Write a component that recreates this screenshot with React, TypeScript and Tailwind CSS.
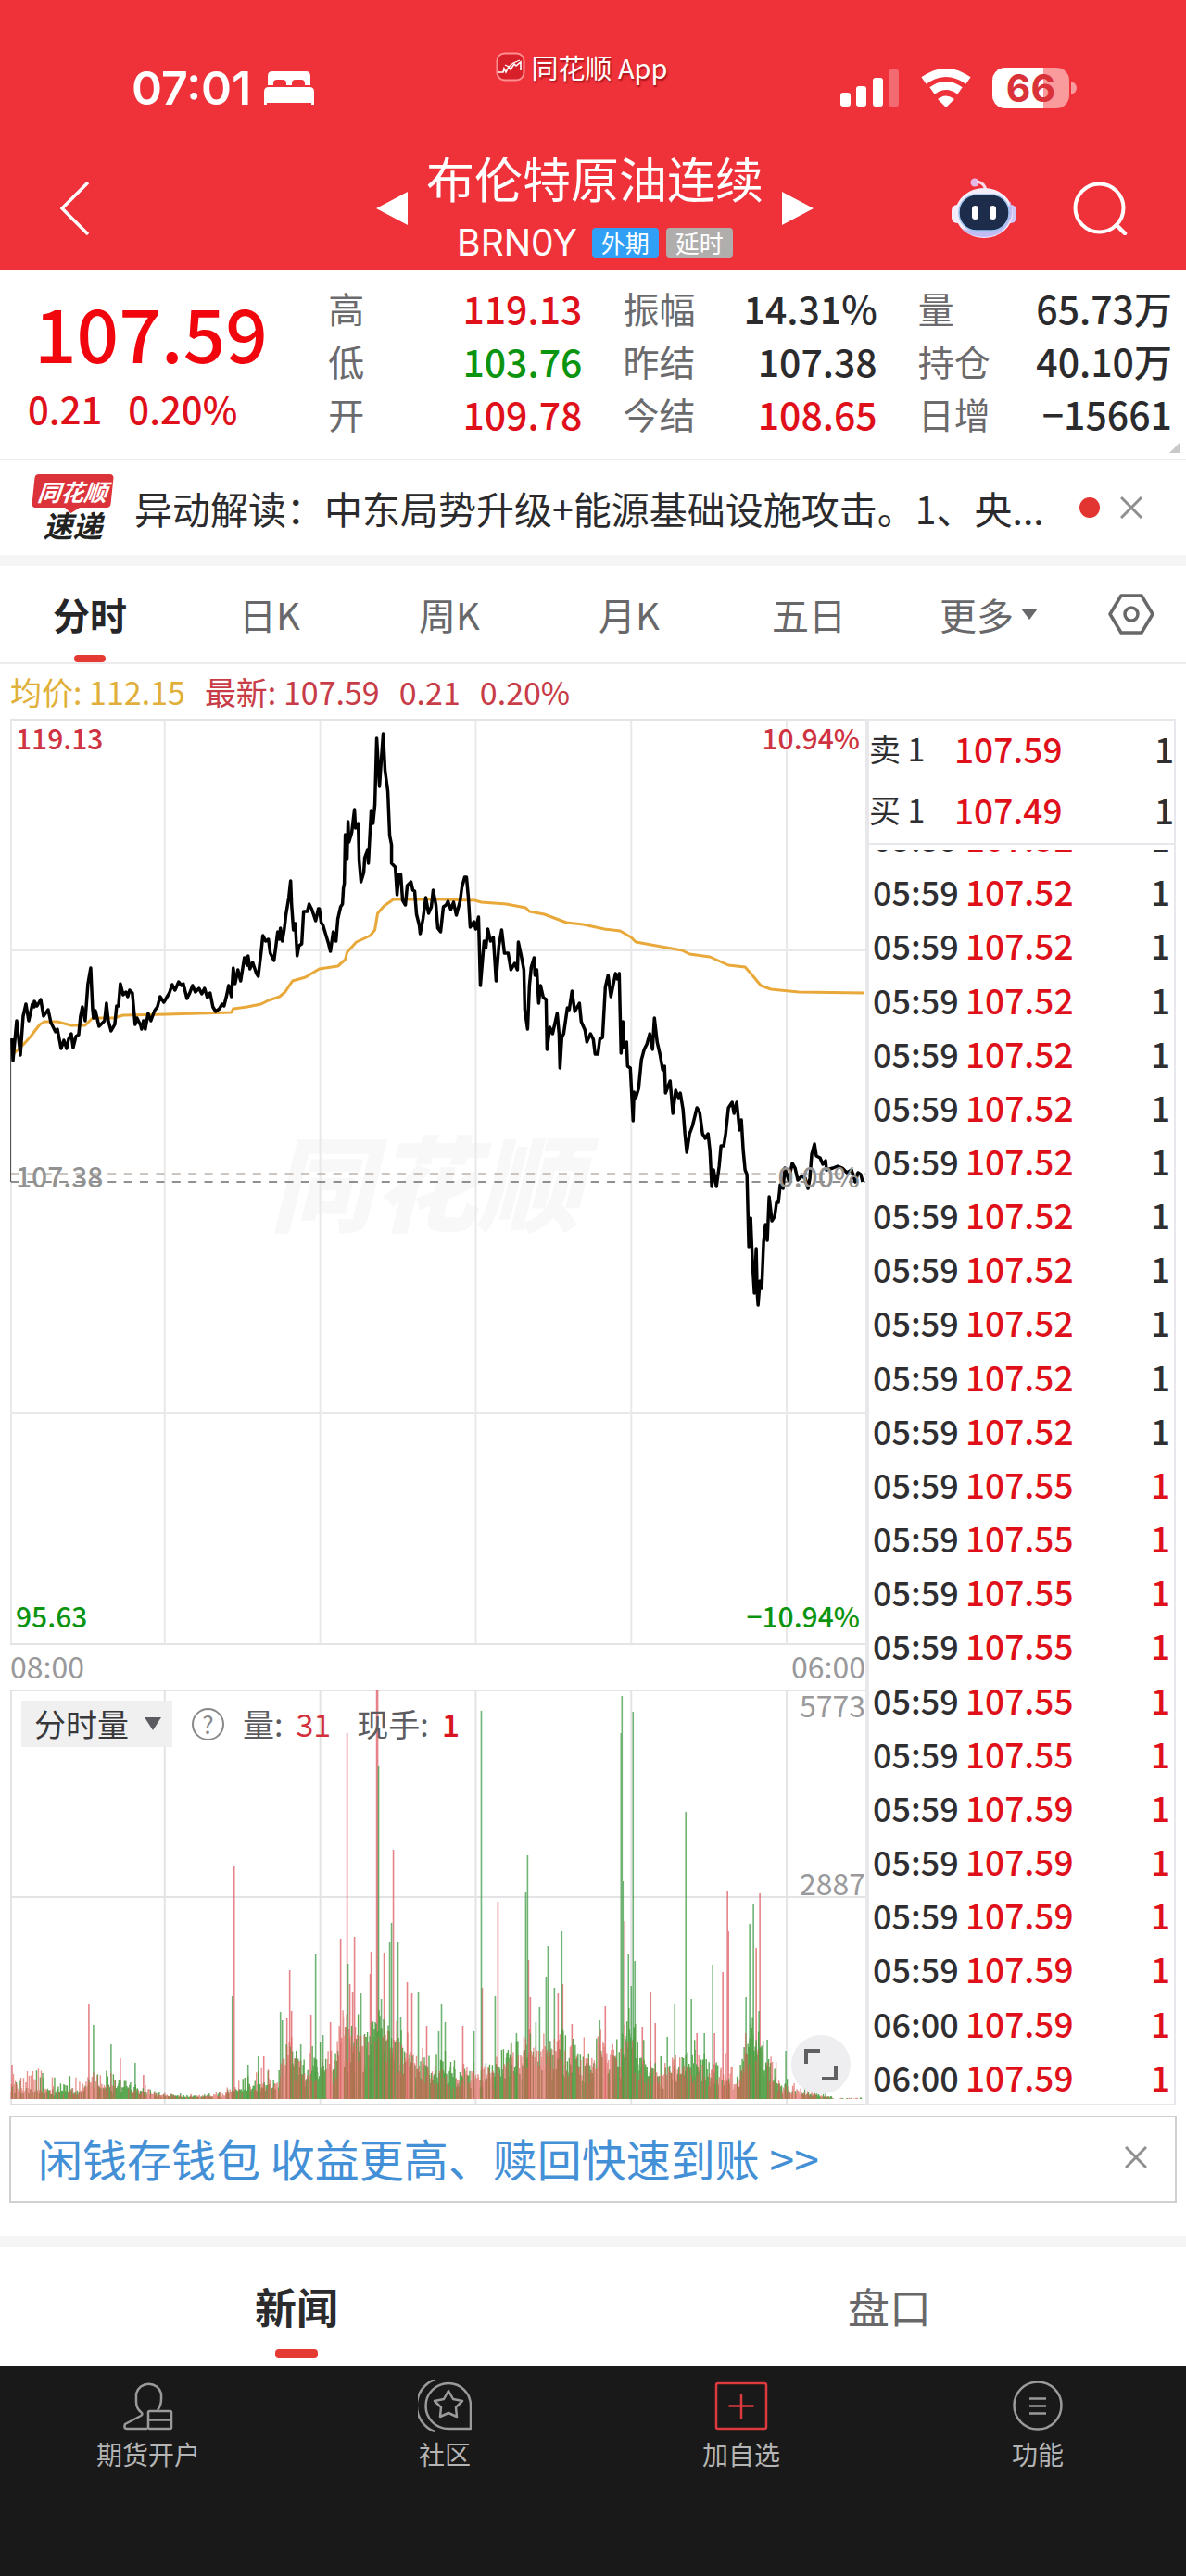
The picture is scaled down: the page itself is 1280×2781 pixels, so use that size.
import { useState } from 'react'
import type { ReactNode } from 'react'

type Tone = 'red' | 'green' | 'dark'

interface Stat {
  label: string
  value: string
  tone: Tone
}

interface Trade {
  time: string
  price: string
  up: boolean
}

const TONES: Record<Tone, string> = {
  red: 'text-[#e0101a]',
  green: 'text-[#0b9410]',
  dark: 'text-[#2b2b2e]',
}

const STATS: Stat[][] = [
  [
    { label: '高', value: '119.13', tone: 'red' },
    { label: '低', value: '103.76', tone: 'green' },
    { label: '开', value: '109.78', tone: 'red' },
  ],
  [
    { label: '振幅', value: '14.31%', tone: 'dark' },
    { label: '昨结', value: '107.38', tone: 'dark' },
    { label: '今结', value: '108.65', tone: 'red' },
  ],
  [
    { label: '量', value: '65.73万', tone: 'dark' },
    { label: '持仓', value: '40.10万', tone: 'dark' },
    { label: '日增', value: '−15661', tone: 'dark' },
  ],
]

const PERIODS = ['分时', '日K', '周K', '月K', '五日', '更多']

const TRADES: Trade[] = [
  ...Array.from({ length: 12 }, () => ({ time: '05:59', price: '107.52', up: false })),
  ...Array.from({ length: 6 }, () => ({ time: '05:59', price: '107.55', up: true })),
  ...Array.from({ length: 4 }, () => ({ time: '05:59', price: '107.59', up: true })),
  ...Array.from({ length: 2 }, () => ({ time: '06:00', price: '107.59', up: true })),
]

// Chart space: 924 x 1000, y grows downwards
const PRICE_LINE =
  '2,345 3,369 7,326 11,363 14,321 17,308 20,326 24,308 26,311 26,305 29,310 33,303 36,321 41,314 44,328 49,338 51,335 55,356 58,347 61,356 63,346 66,340 68,355 71,343 74,341 76,321 78,311 81,326 84,286 87,269 89,313 90,323 92,315 96,332 100,328 102,326 104,307 106,326 109,337 113,330 115,310 117,310 119,286 122,298 125,295 127,300 129,293 132,296 135,330 137,323 141,331 142,335 144,326 146,335 149,318 152,326 156,315 159,311 162,300 166,306 169,301 172,296 175,287 178,293 182,284 185,288 187,286 191,302 194,296 197,288 200,295 204,291 207,297 210,291 213,301 216,296 219,311 222,316 226,313 229,308 231,310 234,298 236,288 239,300 241,269 243,286 246,271 249,283 253,258 256,266 257,256 259,270 262,263 266,275 268,278 271,253 273,234 276,240 279,238 281,253 285,261 287,246 289,230 291,238 292,226 294,240 296,228 298,211 301,193 303,175 304,200 306,228 308,221 310,256 312,245 315,243 317,208 321,208 323,200 326,206 330,218 333,205 334,205 336,220 338,223 341,233 344,243 346,251 349,230 352,240 354,216 357,203 359,200 360,183 361,178 362,125 364,151 365,111 366,133 369,123 372,98 373,118 376,113 377,153 379,176 382,166 383,150 386,142 387,156 390,99 392,113 394,93 396,21 399,73 401,43 403,16 405,56 408,78 410,126 412,136 412,156 416,160 418,190 420,168 422,168 424,196 427,201 429,180 433,176 435,185 437,186 439,211 442,223 443,232 446,216 449,193 452,210 455,203 457,185 460,201 462,226 465,230 468,203 471,201 473,197 476,206 479,198 482,212 486,197 488,182 491,171 493,171 495,193 497,225 501,219 503,227 506,214 508,288 512,240 514,247 516,227 519,240 522,236 525,283 528,245 531,228 534,253 538,253 541,271 545,264 548,271 549,241 552,255 555,271 556,314 559,335 561,288 563,268 566,258 567,277 569,271 571,307 573,288 576,301 579,303 580,357 583,333 586,340 591,318 593,340 594,377 596,344 598,340 602,312 604,314 607,294 610,316 615,307 617,327 621,336 623,349 627,340 630,346 632,362 635,362 637,346 640,344 643,290 646,277 649,300 654,275 656,281 658,275 660,361 662,327 662,355 666,349 667,375 670,377 673,434 674,403 676,409 679,399 682,368 685,357 688,351 691,340 694,357 696,323 699,349 702,362 705,379 707,375 708,404 713,391 716,426 719,401 722,409 724,404 727,422 729,448 731,468 734,448 737,440 742,420 745,425 748,448 751,453 754,448 756,466 758,505 760,487 763,505 766,483 768,461 771,461 773,448 776,420 780,414 782,426 785,414 788,444 790,433 792,466 794,487 796,492 798,570 800,539 802,587 804,620 806,572 807,618 808,633 810,607 812,615 814,565 816,546 818,563 820,516 823,542 826,537 828,522 830,522 832,503 835,507 837,485 841,498 845,480 848,485 851,498 855,494 859,496 862,507 864,496 866,470 869,459 871,472 875,474 878,481 881,477 882,487 889,485 894,483 899,485 904,490 909,487 913,500 916,490 919,492 921,500'

const AVERAGE_LINE =
  '2,363 14,352 22,343 32,330 37,327 51,327 66,331 81,331 89,323 112,323 122,320 169,319 239,317 241,313 256,311 271,308 279,304 291,300 297,295 305,283 319,279 334,270 354,267 362,260 364,252 374,241 389,234 394,228 397,210 404,202 414,195 468,195 502,196 509,198 536,200 557,204 561,208 577,211 601,220 619,222 642,227 659,229 671,236 676,241 726,250 734,254 756,257 776,266 794,268 802,277 811,288 822,292 852,295 923,296'

// x, usual height, highest noise
const VOLUME_ENVELOPE: [number, number, number][] = [
  [0, 14, 38], [6, 10, 26], [30, 9, 34], [71, 7, 24], [85, 17, 30], [111, 13, 34], [136, 8, 18],
  [165, 4, 10], [193, 2, 5], [230, 3, 9], [242, 9, 20], [266, 10, 34], [290, 16, 44], [303, 58, 70],
  [310, 24, 54], [336, 32, 70], [350, 34, 70], [357, 66, 95], [381, 60, 95], [397, 68, 110], [417, 66, 100],
  [438, 32, 60], [470, 26, 55], [499, 24, 50], [523, 26, 50], [548, 46, 75], [577, 48, 92], [597, 46, 85],
  [625, 36, 60], [637, 46, 80], [658, 40, 70], [667, 76, 115], [680, 38, 70], [706, 22, 46], [732, 34, 64],
  [762, 26, 64], [784, 13, 32], [801, 62, 120], [814, 46, 74], [827, 18, 42], [838, 9, 26], [858, 5, 15],
  [880, 3, 8], [890, 0, 1], [923, 0, 2],
]

// x, height, side
const VOLUME_SPIKES: [number, number, 'r' | 'g'][] = [
  [2, 37, 'r'], [85, 102, 'r'], [90, 80, 'g'], [109, 59, 'g'], [119, 44, 'r'], [135, 39, 'g'], [144, 26, 'r'],
  [240, 111, 'g'], [242, 251, 'r'], [257, 37, 'g'], [268, 46, 'g'], [274, 46, 'r'], [292, 94, 'g'], [294, 85, 'g'],
  [299, 87, 'r'], [302, 139, 'r'], [304, 95, 'r'], [314, 59, 'g'], [325, 91, 'r'], [330, 156, 'g'], [338, 69, 'g'],
  [346, 83, 'r'], [357, 173, 'r'], [364, 395, 'r'], [365, 146, 'g'], [367, 124, 'r'], [370, 116, 'r'], [372, 175, 'r'],
  [379, 114, 'g'], [389, 135, 'r'], [390, 159, 'r'], [396, 442, 'r'], [397, 442, 'r'], [398, 360, 'g'], [401, 108, 'g'],
  [404, 158, 'r'], [410, 169, 'g'], [412, 190, 'g'], [414, 269, 'r'], [419, 169, 'g'], [422, 89, 'g'], [429, 126, 'r'],
  [434, 114, 'r'], [441, 116, 'g'], [450, 79, 'r'], [463, 73, 'g'], [466, 103, 'g'], [470, 83, 'g'], [489, 79, 'r'],
  [501, 73, 'g'], [509, 419, 'g'], [510, 120, 'r'], [524, 111, 'g'], [527, 213, 'r'], [547, 71, 'g'], [557, 223, 'g'],
  [559, 263, 'g'], [560, 150, 'r'], [562, 110, 'r'], [568, 83, 'g'], [572, 99, 'g'], [579, 132, 'g'], [581, 165, 'g'],
  [588, 120, 'g'], [592, 114, 'r'], [596, 181, 'g'], [597, 124, 'r'], [607, 81, 'r'], [637, 85, 'g'], [643, 100, 'r'],
  [660, 395, 'g'], [661, 435, 'g'], [662, 235, 'g'], [664, 192, 'r'], [668, 157, 'g'], [671, 122, 'g'], [673, 418, 'g'],
  [675, 149, 'g'], [683, 78, 'r'], [692, 115, 'r'], [697, 82, 'r'], [710, 67, 'g'], [718, 103, 'g'], [730, 310, 'g'],
  [736, 108, 'g'], [742, 71, 'r'], [750, 71, 'g'], [759, 145, 'g'], [761, 71, 'r'], [770, 137, 'r'], [775, 224, 'r'],
  [776, 181, 'r'], [795, 110, 'g'], [799, 189, 'g'], [803, 210, 'g'], [806, 163, 'r'], [809, 95, 'g'], [810, 222, 'r'],
  [818, 64, 'g'], [838, 52, 'g'],
]

const VOLUME_BASE = 442

function envelopeAt(x: number): [number, number] {
  for (let i = 1; i < VOLUME_ENVELOPE.length; i++) {
    const [x1, low1, high1] = VOLUME_ENVELOPE[i]
    if (x > x1) continue
    const [x0, low0, high0] = VOLUME_ENVELOPE[i - 1]
    const t = (x - x0) / (x1 - x0)
    return [low0 + (low1 - low0) * t, high0 + (high1 - high0) * t]
  }
  return [0, 1]
}

// Minute bars for both sides, as two path strings
function buildVolume() {
  let seed = 20117
  const random = () => {
    seed = (seed * 16807) % 2147483647
    return seed / 2147483647
  }
  const paths = { r: '', g: '' }
  for (let x = 1; x < 922; x += 0.5) {
    const [low, high] = envelopeAt(x)
    const r = random()
    const height = low * (0.4 + 0.75 * random()) + (high - low) * r * r * r * r
    const side = random() + Math.sin(x / 11) * 0.3 > 0.5 ? 'r' : 'g'
    if (height > 0.4) paths[side] += `M${x.toFixed(1)} ${VOLUME_BASE}v-${height.toFixed(1)}`
  }
  return paths
}

const VOLUME = buildVolume()
const SPIKES = {
  r: VOLUME_SPIKES.filter((s) => s[2] === 'r').map(([x, h]) => `M${x} ${VOLUME_BASE}v-${h}`).join(''),
  g: VOLUME_SPIKES.filter((s) => s[2] === 'g').map(([x, h]) => `M${x} ${VOLUME_BASE}v-${h}`).join(''),
}

function CloseIcon() {
  return (
    <svg viewBox="0 0 24 24" className="size-6" fill="none" stroke="#8f8f8f" strokeWidth="3">
      <path d="M1 1l22 22M23 1L1 23" />
    </svg>
  )
}

function StatusBar() {
  return (
    <div className="grid h-[78px] grid-cols-[1fr_auto_1fr]">
      <div className="flex items-center gap-3.5 self-center pl-[142px]">
        <span className="font-['Inter',sans-serif] text-[50px] leading-none font-semibold">07:01</span>
        <svg viewBox="0 0 54 38" className="h-[38px] w-[54px]" fill="#fff">
          <path d="M4 16V6q0-5 5-5h36q5 0 5 5v10h-6v-2q0-4-4-4h-6q-4 0-4 4v2h-6v-2q0-4-4-4h-6q-4 0-4 4v2z" />
          <path d="M0 37V23q0-5 5-5h44q5 0 5 5v14h-3v-2H3v2z" />
        </svg>
      </div>
      <div className="mr-6 flex items-center gap-1.5 self-start text-[29px] leading-8 text-white [text-shadow:1px_2px_2px_#a01018]">
        <svg viewBox="0 0 32 32" className="size-8" fill="none">
          <rect x="1.5" y="1.5" width="29" height="29" rx="8" fill="#d8202b" stroke="#ff8f8f" strokeWidth="2" />
          <path d="M3 22h5l1-4 2 4 3-6 2 3 4-6 2 2 5-4v9" stroke="#fff" strokeWidth="1.6" />
          <path d="M10 14l4 2 5-4 7-3" stroke="#fff" strokeWidth="1.2" />
        </svg>
        <span>同花顺 App</span>
      </div>
      <div className="flex items-center gap-[22px] self-center justify-self-end pr-[118px]">
        <svg viewBox="0 0 64 41" className="h-[41px] w-16" fill="#fff">
          <rect x="0" y="25" width="11" height="15" rx="3" />
          <rect x="17" y="18" width="11" height="22" rx="3" />
          <rect x="35" y="9" width="11" height="31" rx="3" />
          <rect x="52" y="0" width="11" height="40" rx="3" opacity=".28" />
        </svg>
        <svg viewBox="0 0 56 41" className="h-[41px] w-14" fill="none" stroke="#fff">
          <path d="M4 12q24-17 48 0" strokeWidth="9" />
          <path d="M13 23q15-11 30 0" strokeWidth="9" />
          <path d="M28 41l-9-9q9-7 18 0z" fill="#fff" stroke="none" />
        </svg>
        <div className="flex items-center gap-0.5">
          <span className="flex h-[44px] w-[83px] items-center justify-center rounded-[14px] bg-linear-to-r from-white from-66% to-[#f99a9c] to-66% font-['Inter',sans-serif] text-[41px] leading-none font-bold text-[#d93239]">
            66
          </span>
          <svg viewBox="0 0 6 14" className="h-3.5 w-1.5" fill="#f99a9c">
            <path d="M0 0q6 2 6 7t-6 7z" />
          </svg>
        </div>
      </div>
    </div>
  )
}

function TitleBar() {
  return (
    <div className="grid h-[158px] grid-cols-[1fr_auto_1fr] items-center pt-6">
      <button aria-label="返回" className="justify-self-start pl-[65px]">
        <svg viewBox="0 0 32 58" className="h-[58px] w-8" fill="none" stroke="#fff" strokeWidth="3.5">
          <path d="M30 1L2 29l28 28" />
        </svg>
      </button>
      <div className="ml-1 flex items-center gap-5">
        <button aria-label="上一个">
          <svg viewBox="0 0 34 36" className="h-9 w-[34px]" fill="#fff">
            <path d="M34 0v36L0 18z" />
          </svg>
        </button>
        <div className="flex flex-col items-center gap-7 pb-1.5">
          <h1 className="text-[52px] leading-[52px]">布伦特原油连续</h1>
          <p className="flex items-center gap-2 text-[26px] leading-8">
            <span className="mr-2 font-['Inter',sans-serif] text-[39px]">BRN0Y</span>
            <span className="w-[72px] rounded-sm bg-[#2fa0f5] text-center">外期</span>
            <span className="w-[72px] rounded-sm bg-[#b0adad] text-center">延时</span>
          </p>
        </div>
        <button aria-label="下一个">
          <svg viewBox="0 0 34 36" className="h-9 w-[34px]" fill="#fff">
            <path d="M0 0v36l34-18z" />
          </svg>
        </button>
      </div>
      <div className="flex items-center gap-[60px] justify-self-end pr-[63px]">
        <button aria-label="智能助手">
          <svg viewBox="0 0 72 66" className="h-[66px] w-[72px]">
            <circle cx="26" cy="5" r="4.5" fill="#e6b8e6" />
            <path d="M28 4q8 1 10 9" fill="none" stroke="#fbdcea" strokeWidth="3" />
            <rect x="1" y="29" width="12" height="20" rx="6" fill="#f2ecfb" />
            <rect x="59" y="29" width="12" height="20" rx="6" fill="#cfc4f8" />
            <ellipse cx="36" cy="38" rx="31" ry="27" fill="#f4eefb" />
            <path d="M64 25q6 14-2 25-9 14-26 14-15 0-24-9 20 4 36-2 14-7 16-28z" fill="#c3bcf4" />
            <rect x="9" y="18" width="54" height="39" rx="19" fill="#1e2c4c" stroke="#9fc2ee" strokeWidth="1.5" />
            <rect x="23" y="30" width="7" height="15" rx="3.5" fill="#fff" />
            <rect x="42" y="30" width="7" height="15" rx="3.5" fill="#fff" />
          </svg>
        </button>
        <button aria-label="搜索">
          <svg viewBox="0 0 59 58" className="h-[58px] w-[59px]" fill="none" stroke="#fff" strokeWidth="4">
            <circle cx="28.500" cy="28.500" r="26" />
            <path d="M47 47l9 9" strokeWidth="4.500" strokeLinecap="round" />
          </svg>
        </button>
      </div>
    </div>
  )
}

function Quote() {
  return (
    <section className="relative flex border-b-2 border-[#ececee] pt-3 pr-[15px] pb-5">
      <div className="w-[28%] font-medium text-[#f0060c]">
        <p className="pl-[37px] text-[80px] leading-[106px]">107.59</p>
        <p className="mt-1.5 flex gap-7 pl-[30px] text-[40px] leading-[50px] text-[#e0101a]">
          <span>0.21</span>
          <span>0.20%</span>
        </p>
      </div>
      <div className="flex flex-1 gap-11">
        {STATS.map((column) => (
          <dl key={column[0].label} className="flex-1">
            {column.map((stat) => (
              <div key={stat.label} className="flex items-center justify-between leading-[57px]">
                <dt className="text-[39px] text-[#6b6b6e]">{stat.label}</dt>
                <dd className={`text-[41px] font-medium ${TONES[stat.tone]}`}>{stat.value}</dd>
              </div>
            ))}
          </dl>
        ))}
      </div>
      <svg viewBox="0 0 12 12" className="absolute right-1.5 bottom-1.5 size-3" fill="#c8c8c8">
        <path d="M12 0v12H0z" />
      </svg>
    </section>
  )
}

function NewsFlash() {
  return (
    <section className="flex h-[102px] items-center pr-[47px] pl-9">
      <div className="w-[85px] shrink-0 text-center font-bold italic">
        <div className="relative -skew-x-6 rounded bg-[#dc3239] text-[25px] leading-9 text-white">
          同花顺
          <svg viewBox="0 0 16 6" className="absolute top-full left-9 h-1.5 w-4" fill="#dc3239">
            <path d="M0 0h16L7 6z" />
          </svg>
        </div>
        <div className="text-[32px] leading-9 text-[#222]">速递</div>
      </div>
      <a href="#news" className="ml-6 min-w-0 flex-1 overflow-hidden text-[41px] leading-[60px] whitespace-nowrap text-[#2b2b2e]">
        异动解读：中东局势升级+能源基础设施攻击。1、央...
      </a>
      <span className="ml-8 size-[22px] rounded-full bg-[#e23430]" />
      <button aria-label="关闭快讯" className="ml-[22px]">
        <CloseIcon />
      </button>
    </section>
  )
}

function PeriodTabs() {
  const [active, setActive] = useState('分时')
  return (
    <nav className="flex h-[106px] border-b-2 border-[#ececee] text-[40px] text-[#68686b]">
      {PERIODS.map((name) => (
        <button
          key={name}
          onClick={() => setActive(name)}
          className={`relative flex flex-1 items-center justify-center gap-2 ${active === name ? 'font-bold text-[#262628]' : ''}`}
        >
          {name}
          {name === '更多' && (
            <svg viewBox="0 0 18 12" className="h-3 w-[18px]" fill="#68686b">
              <path d="M0 0h18L9 12z" />
            </svg>
          )}
          {active === name && <span className="absolute bottom-0 h-2 w-[34px] rounded-sm bg-[#e53a33]" />}
        </button>
      ))}
      <button aria-label="图表设置" className="w-[116px] pl-8">
        <svg viewBox="0 0 50 44" className="h-11 w-[50px]" fill="none" stroke="#68686b" strokeWidth="3.5">
          <path d="M14 2h22l12 20-12 20H14L2 22z" strokeLinejoin="round" />
          <circle cx="25" cy="22" r="7" />
        </svg>
      </button>
    </nav>
  )
}

function PriceChart() {
  return (
    <div className="relative h-[1000px] text-[30px] leading-8 font-medium">
      <p className="absolute top-[436px] left-[280px] text-[112px] leading-[120px] font-black text-[#f8f8f8] italic">
        同花顺
      </p>
      <svg viewBox="0 0 924 1000" preserveAspectRatio="none" className="absolute inset-0 size-full" fill="none">
        <path
          d="M1 0V1000M167 0V1000M335 0V1000M503 0V1000M671 0V1000M839 0V1000M0 250H924M0 749H924"
          stroke="#e9e9ea"
          strokeWidth="2"
        />
        <path d="M0 1H924M0 999H924" stroke="#e3e4e6" strokeWidth="2" />
        <path d="M1 491H924" stroke="#bdb3ac" strokeWidth="1.500" strokeDasharray="9 8.400" />
        <path d="M1 500H924" stroke="#6c6c6c" strokeWidth="1.500" strokeDasharray="9 8.400" />
        <path d="M0 346V500" stroke="#555" strokeWidth="2" />
        <polyline points={AVERAGE_LINE} stroke="#e9a83a" strokeWidth="3" strokeLinejoin="round" />
        <polyline points={PRICE_LINE} stroke="#000" strokeWidth="3.500" strokeLinejoin="round" />
      </svg>
      <span className="absolute top-1 left-1.5 text-[#cf3341]">119.13</span>
      <span className="absolute top-1 right-1.5 text-[#cf3341]">10.94%</span>
      <span className="absolute top-[477px] left-1.5 text-[#929292]">107.38</span>
      <span className="absolute top-[477px] right-1.5 text-[#929292]">0.00%</span>
      <span className="absolute bottom-4 left-1.5 text-[#0b9410]">95.63</span>
      <span className="absolute right-1.5 bottom-4 text-[#0b9410]">−10.94%</span>
    </div>
  )
}

function VolumeChart() {
  return (
    <div className="relative h-[449px] text-[34px] leading-[50px] text-[#5c5c60]">
      <svg viewBox="0 0 924 449" preserveAspectRatio="none" className="absolute inset-0 size-full" fill="none">
        <path
          d="M1 0V449M167 0V449M335 0V449M503 0V449M671 0V449M839 0V449M0 1H924M0 224H924"
          stroke="#e4e4e6"
          strokeWidth="2"
        />
        <path d="M0 448H924" stroke="#dcdde0" strokeWidth="2" />
        <path d={SPIKES.r} stroke="#dd5a62" strokeWidth="1.600" opacity=".75" />
        <path d={SPIKES.g} stroke="#3f9b45" strokeWidth="1.600" opacity=".75" />
        <path d={VOLUME.g} stroke="#4a9d3f" strokeWidth="1.400" opacity=".9" />
        <path d={VOLUME.r} stroke="#dc5c54" strokeWidth="1.400" opacity=".65" />
      </svg>
      <div className="relative flex items-center pt-3 pl-3">
        <label className="relative flex bg-[#f0f0f1]">
          <select
            aria-label="副图指标"
            className="w-[163px] appearance-none pl-3.5 text-[34px] leading-[50px] text-[#38383b]"
          >
            <option>分时量</option>
          </select>
          <svg viewBox="0 0 18 14" className="absolute top-[18px] right-3 h-3.5 w-[18px]" fill="#5c5c60">
            <path d="M0 0h18L9 14z" />
          </svg>
        </label>
        <button
          aria-label="指标说明"
          className="ml-[21px] flex size-[35px] items-center justify-center rounded-full border-2 border-[#88888b] text-[26px] leading-none text-[#88888b]"
        >
          ?
        </button>
        <span className="ml-5 flex gap-3.5">
          量: <span className="text-[#d32f3a]">31</span>
        </span>
        <span className="ml-7 flex gap-3.5">
          现手: <span className="font-medium text-[#d8141e]">1</span>
        </span>
      </div>
      <span className="absolute top-0 right-0 text-[32px] leading-8 text-[#9a9a9c]">5773</span>
      <span className="absolute top-[192px] right-0 text-[32px] leading-8 text-[#9a9a9c]">2887</span>
      <button
        aria-label="全屏"
        className="absolute right-4 bottom-3 flex size-16 items-center justify-center rounded-full bg-[#ececef]/90"
      >
        <svg viewBox="0 0 36 36" className="size-9" fill="none" stroke="#606063" strokeWidth="4">
          <path d="M2 17V3h15M34 19v14H19" />
        </svg>
      </button>
    </div>
  )
}

function OrderPanel() {
  return (
    <aside className="w-[335px] border-t-2 border-r-2 border-b-2 border-l-4 border-[#e8e8ec] text-[37px] text-[#2f2f32]">
      <table className="h-[134px] w-full border-b-2 border-[#e8e8ec]">
        <tbody>
          {[
            ['卖', '107.59'],
            ['买', '107.49'],
          ].map(([side, price]) => (
            <tr key={side} className="leading-10">
              <th className="w-[92px] pb-1.5 text-left text-[34px] font-normal whitespace-nowrap">{side} 1</th>
              <td className="pb-1.5 font-medium text-[#e0101a]">{price}</td>
              <td className="pb-1.5 text-right font-medium">1</td>
            </tr>
          ))}
        </tbody>
      </table>
      <div className="mt-1.5 flex h-[1353px] flex-col justify-end overflow-hidden">
        <table className="h-[1396px] w-full shrink-0 font-medium">
          <tbody>
            {TRADES.map((trade, i) => (
              <tr key={i} className="leading-8">
                <td className="w-[104px] pl-1 text-[36px]">{trade.time}</td>
                <td className="text-[#e0101a]">{trade.price}</td>
                <td className={`pr-1 text-right ${trade.up ? 'text-[#e0101a]' : ''}`}>1</td>
              </tr>
            ))}
          </tbody>
        </table>
      </div>
    </aside>
  )
}

function Promo() {
  return (
    <div className="mx-2.5 mt-[11px] flex h-[94px] items-center justify-between border-2 border-[#cfd0d2] pr-[30px] pb-1 pl-[29px]">
      <a href="#wallet" className="text-[48px] leading-[60px] text-[#4490d6]">
        闲钱存钱包 收益更高、赎回快速到账 &gt;&gt;
      </a>
      <button aria-label="关闭广告">
        <CloseIcon />
      </button>
    </div>
  )
}

function InfoTabs() {
  const [active, setActive] = useState('新闻')
  return (
    <nav className="flex h-[128px] text-[45px] text-[#68686b]">
      {['新闻', '盘口'].map((name) => (
        <button
          key={name}
          onClick={() => setActive(name)}
          className={`relative flex flex-1 items-center justify-center ${active === name ? 'font-bold text-[#2b2b2e]' : ''}`}
        >
          {name}
          {active === name && <span className="absolute bottom-2 h-2.5 w-[46px] rounded bg-[#e53a33]" />}
        </button>
      ))}
    </nav>
  )
}

function NavItem({ label, children }: { label: string; children: ReactNode }) {
  return (
    <button className="flex flex-1 flex-col items-center gap-1 text-[28px] leading-9">
      <svg viewBox="0 0 58 58" className="size-[58px]" fill="none" stroke="#9a9a9a" strokeWidth="2.500" strokeLinejoin="round">
        {children}
      </svg>
      {label}
    </button>
  )
}

export default function App() {
  return (
    <div className="flex min-h-screen flex-col bg-white font-['Noto_Sans_CJK_SC',sans-serif]">
      <header className="bg-[#ef3139] pt-14 text-white">
        <StatusBar />
        <TitleBar />
      </header>
      <main>
        <Quote />
        <NewsFlash />
        <div className="h-3 bg-[#f5f5f6]" />
        <PeriodTabs />
        <p className="flex h-[59px] items-center gap-[21px] pl-[11px] text-[34px] text-[#c83c48]">
          <span className="text-[#e0b03a]">均价: 112.15</span>
          <span>最新: 107.59</span>
          <span>0.21</span>
          <span>0.20%</span>
        </p>
        <section className="flex pr-[11px] pl-[11px]">
          <div className="flex-1">
            <PriceChart />
            <div className="flex h-12 items-center justify-between pb-1 text-[32px] text-[#98989a]">
              <span>08:00</span>
              <span>06:00</span>
            </div>
            <VolumeChart />
          </div>
          <OrderPanel />
        </section>
        <Promo />
        <div className="mt-9 h-3 bg-[#f5f5f6]" />
        <InfoTabs />
      </main>
      <nav className="flex flex-1 items-start bg-[#191919] pt-[15px] text-[#b4b4b4]">
        <NavItem label="期货开户">
          <path d="M39 33q4-5 4-12V15a14 14 0 0 0-27 0v9q0 7 5 11 3 2 0 4L4 48q-2 5 2 5h22" />
          <rect x="29" y="34" width="25" height="19" rx="1.500" />
          <path d="M29 43.500h25" />
        </NavItem>
        <NavItem label="社区">
          <path d="M18 0A30 30 0 0 0 18 56" />
          <path d="M33 4a24 24 0 0 0 0 49H57V28A24 24 0 0 0 33 4z" />
          <path d="M33 12l5 9 10 2-7 7 1 10-9-4-9 4 1-10-7-7 10-2z" />
        </NavItem>
        <NavItem label="加自选">
          <rect x="2" y="4" width="54" height="49" rx="2" stroke="#dc3a3e" />
          <path d="M29 15v27M15.500 28.500h27" stroke="#dc3a3e" />
        </NavItem>
        <NavItem label="功能">
          <circle cx="29" cy="28" r="25.500" />
          <path d="M20 20.500h18M20 28.500h18M20 36.500h18" />
        </NavItem>
      </nav>
    </div>
  )
}
